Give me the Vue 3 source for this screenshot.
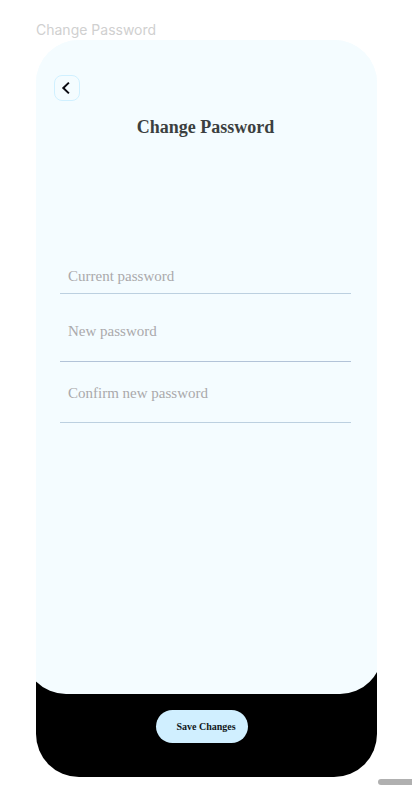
<script setup>
import { reactive } from 'vue'

const fields = [
  { id: 'current', label: 'Current password', autocomplete: 'current-password' },
  { id: 'new', label: 'New password', autocomplete: 'new-password' },
  { id: 'confirm', label: 'Confirm new password', autocomplete: 'new-password' },
]
const values = reactive({ current: '', new: '', confirm: '' })
</script>

<template>
  <div class="page">
    <p class="frame-name">Change Password</p>
    <main class="phone">
      <div class="panel">
        <button class="back" type="button" aria-label="Back">
          <svg width="10" height="14" viewBox="0 0 10 14" fill="none" aria-hidden="true">
            <path d="M7.9 1.6 2.3 7l5.6 5.4" stroke="#0b0b12" stroke-width="2" />
          </svg>
        </button>
        <h1 class="title">Change Password</h1>
        <form id="password-form" class="form" @submit.prevent>
          <input
            v-for="field in fields"
            :key="field.id"
            v-model="values[field.id]"
            :class="['field', field.id]"
            type="password"
            :placeholder="field.label"
            :aria-label="field.label"
            :autocomplete="field.autocomplete"
          />
        </form>
      </div>
      <footer class="footer">
        <button class="save" type="submit" form="password-form">Save Changes</button>
      </footer>
    </main>
    <div class="scroll-thumb"></div>
  </div>
</template>

<style>
body {
  margin: 0;
  background: #fff;
}
</style>

<style scoped>
.page {
  position: relative;
  box-sizing: border-box;
  min-height: 100vh;
  padding: 20px 35px 8px 36px;
  display: flex;
  flex-direction: column;
  overflow: hidden;
}
.frame-name {
  margin: 0;
  height: 20px;
  font: 14px/20px Inter, sans-serif;
  color: #d0d0d0;
}
.phone {
  flex: 1;
  display: flex;
  flex-direction: column;
  border-radius: 43px;
  overflow: hidden;
  background: linear-gradient(#f4fcff 50%, #000 50%);
}
.panel {
  flex: 1;
  margin: 0 -5px 0 -12px;
  padding: 35px 31px 40px 36px;
  border-radius: 0 0 42px 42px;
  background: #f4fcff;
}
.back {
  display: flex;
  align-items: center;
  justify-content: center;
  box-sizing: border-box;
  width: 26px;
  height: 26px;
  margin: 0 0 0 -6px;
  padding: 0 2px 0 0;
  border: 1px solid #d0f0ff;
  border-radius: 8px;
  background: transparent;
}
.title {
  margin: 14px 0 0;
  text-align: center;
  font: bold 18px/24px "Liberation Serif", serif;
  color: #3b3f40;
}
.form {
  display: flex;
  flex-direction: column;
  margin-top: 120px;
}
.field {
  box-sizing: border-box;
  width: 100%;
  min-width: 0;
  height: 35px;
  padding: 0 8px;
  border: 0;
  border-bottom: 1px solid #bcd0e0;
  border-radius: 0;
  outline: 0;
  background: transparent;
  font: 15px/20px "Liberation Serif", serif;
  color: #3b3f40;
}
.field::placeholder {
  color: #aaa9ab;
  opacity: 1;
}
.new {
  height: 68px;
  padding-top: 8px;
  border-color: #b2c3d8;
}
.confirm {
  height: 61px;
  padding-top: 2px;
}
.footer {
  display: flex;
  justify-content: center;
  padding: 16px 9px 34px 0;
}
.save {
  height: 33px;
  padding: 0 12px 0 20px;
  border: 0;
  border-radius: 17px;
  background: #d0efff;
  font: bold 10px/12px "Liberation Serif", serif;
  color: #101820;
}
.scroll-thumb {
  position: absolute;
  right: -8px;
  bottom: 0;
  width: 42px;
  height: 6px;
  border-radius: 3px;
  background: #b0b0b0;
}
</style>
